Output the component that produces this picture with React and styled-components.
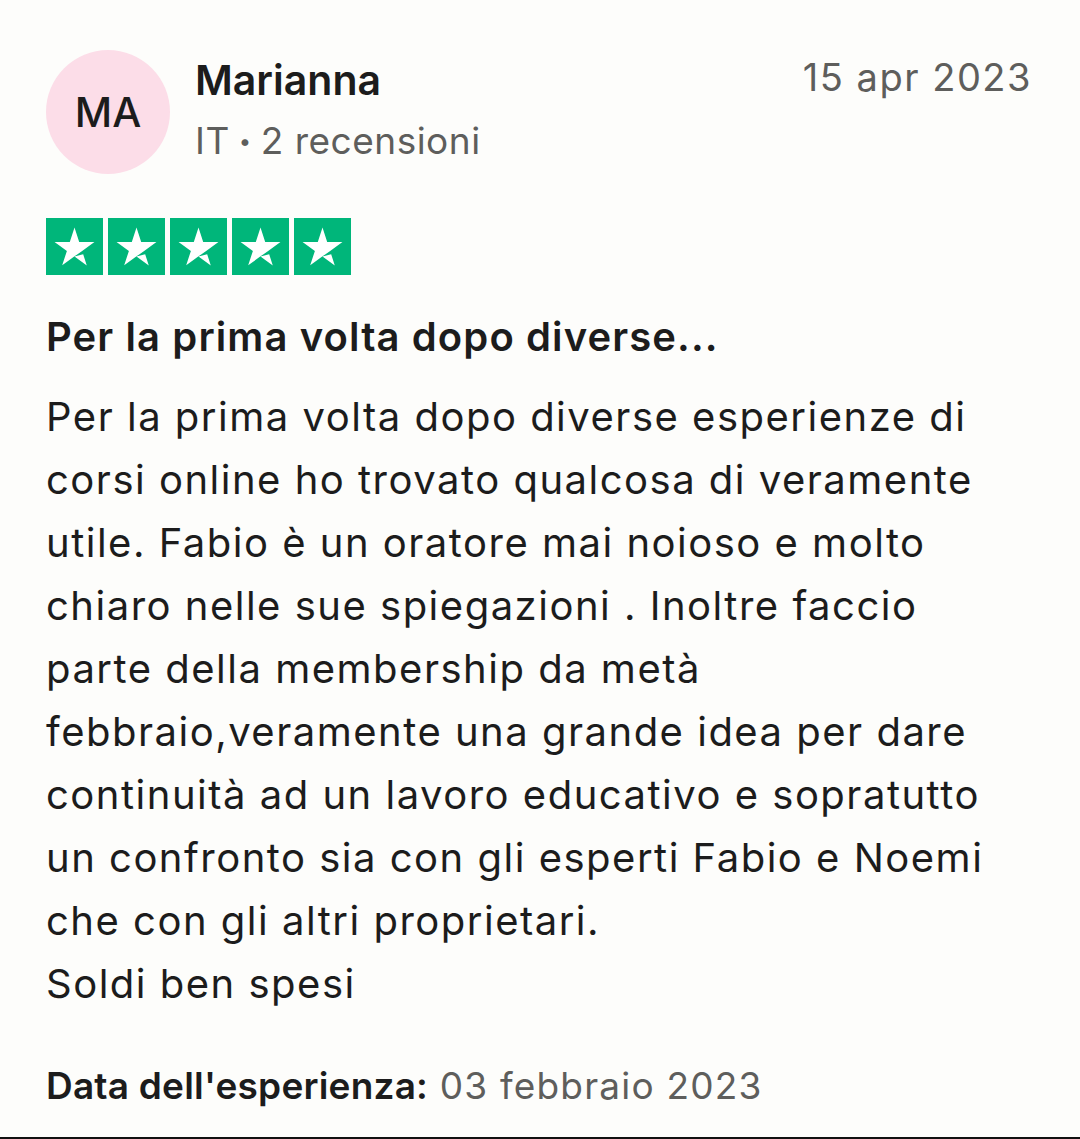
import React from "react";
import styled, { createGlobalStyle } from "styled-components";

const Global = createGlobalStyle`
  html, body { margin: 0; padding: 0; background: #fdfdfb; }
  body { font-family: Inter, "Noto Sans", sans-serif; color: #1c1c1c; }
`;

const Card = styled.article`
  box-sizing: border-box;
  width: 1080px;
  height: 1139px;
  padding: 50px 48px 0 46px;
  background: #fdfdfb;
  border-bottom: 2px solid #111;
  display: flex;
  flex-direction: column;
`;

const Header = styled.header`
  display: flex;
  align-items: flex-start;
  gap: 25px;
`;

const Avatar = styled.div`
  flex: none;
  width: 124px;
  height: 124px;
  border-radius: 50%;
  background: #fcdde8;
  display: flex;
  align-items: center;
  justify-content: center;
  font-size: 41px;
  font-weight: 500;
  color: #1c1c1c;
`;

const Who = styled.div`
  flex: 1;
  display: flex;
  flex-direction: column;
  padding-top: 6px;
  gap: 14px;
`;

const Name = styled.div`
  font-size: 41px;
  font-weight: 600;
  line-height: 48px;
`;

const Meta = styled.div`
  font-size: 37px;
  line-height: 46px;
  letter-spacing: 0.5px;
  color: #5e5e5c;
  display: flex;
  align-items: center;
  gap: 9px;
`;

const Dot = styled.span`
  font-size: 22px;
  line-height: 1;
`;

const DateText = styled.time`
  font-size: 38px;
  line-height: 46px;
  letter-spacing: 1.5px;
  color: #5e5e5c;
  padding-top: 4px;
`;

const Stars = styled.div`
  display: flex;
  gap: 5px;
  margin-top: 44px;
`;

const StarBox = styled.div`
  width: 57px;
  height: 57px;
  background: #00b67a;
  display: flex;
  align-items: center;
  justify-content: center;
`;

const Title = styled.h2`
  margin: 38px 0 0;
  font-size: 40px;
  font-weight: 600;
  line-height: 48px;
  letter-spacing: 1.1px;
`;

const Body = styled.p`
  margin: 24px 0 0;
  font-size: 40px;
  line-height: 63px;
  font-weight: 400;
  letter-spacing: 1.5px;
`;

const Footer = styled.div`
  margin-top: 48px;
  font-size: 37px;
  line-height: 46px;
  letter-spacing: 1.2px;
  color: #5e5e5c;
`;

const Strong = styled.strong`
  font-weight: 600;
  letter-spacing: 0.2px;
  color: #1c1c1c;
`;

const Star = () => (
  <svg width="57" height="57" viewBox="0 0 96 96" aria-hidden="true">
    <path
      fill="#fff"
      d="M48 64.7L62.6 61l6.1 18.8L48 64.7zM81.6 40.4H55.9L48 16.2l-7.9 24.2H14.4l20.8 15-7.9 24.2 20.8-15 12.8-9.2 20.7-15z"
    />
  </svg>
);

export default function App() {
  return (
    <>
      <Global />
      <Card>
        <Header>
          <Avatar>MA</Avatar>
          <Who>
            <Name>Marianna</Name>
            <Meta>
              <span>IT</span>
              <Dot>•</Dot>
              <span>2 recensioni</span>
            </Meta>
          </Who>
          <DateText>15 apr 2023</DateText>
        </Header>
        <Stars>
          {[0, 1, 2, 3, 4].map((i) => (
            <StarBox key={i}>
              <Star />
            </StarBox>
          ))}
        </Stars>
        <Title>Per la prima volta dopo diverse...</Title>
        <Body>
          Per la prima volta dopo diverse esperienze di corsi online ho trovato
          qualcosa di veramente utile. Fabio è un oratore mai noioso e molto
          chiaro nelle sue spiegazioni . Inoltre faccio parte della membership
          da metà febbraio,veramente una grande idea per dare continuità ad un
          lavoro educativo e sopratutto un confronto sia con gli esperti Fabio e
          Noemi che con gli altri proprietari.
          <br />
          Soldi ben spesi
        </Body>
        <Footer>
          <Strong>Data dell'esperienza:</Strong> 03 febbraio 2023
        </Footer>
      </Card>
    </>
  );
}
